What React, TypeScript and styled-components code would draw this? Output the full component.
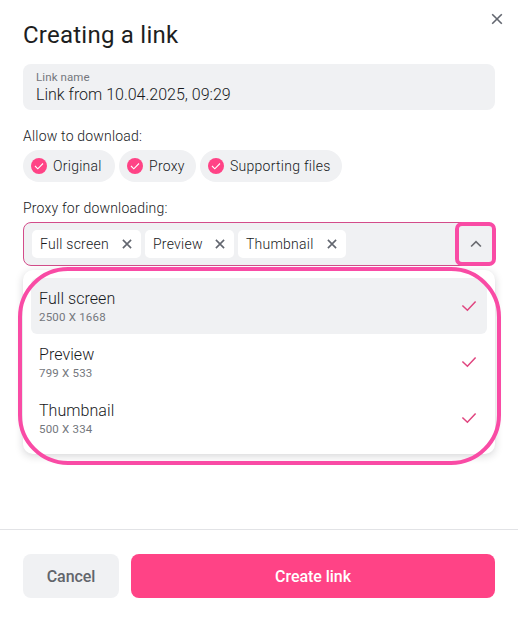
import React from "react";
import styled, { createGlobalStyle } from "styled-components";

const GlobalStyle = createGlobalStyle`
  *, *::before, *::after { box-sizing: border-box; }
  body { margin: 0; background: #fff; }
  button { border: 0; padding: 0; background: none; font: inherit; color: inherit; cursor: pointer; }
`;

const Dialog = styled.main`
  position: relative;
  display: flex;
  flex-direction: column;
  width: 518px;
  height: 619px;
  overflow: hidden;
  background: #fff;
  color: #17191c;
  font-family: Roboto, "Liberation Sans", sans-serif;
  font-size: 14px;
  font-weight: 300;
`;

const CloseButton = styled.button`
  position: absolute;
  top: 11px;
  right: 13px;
  width: 16px;
  height: 16px;
  color: #62666f;
  svg { display: block; }
`;

const Body = styled.div`
  flex: 1;
  display: flex;
  flex-direction: column;
  padding: 20px 23px 0;
`;

const Title = styled.h1`
  margin: 0 0 14px;
  font-size: 24px;
  font-weight: 400;
  line-height: 30px;
  letter-spacing: 0.24px;
  color: #1d1e21;
`;

const Field = styled.label`
  display: flex;
  flex-direction: column;
  height: 46px;
  padding: 6px 13px;
  border-radius: 8px;
  background: #f0f1f3;
`;

const FieldLabel = styled.span`
  font-size: 11.5px;
  font-weight: 400;
  line-height: 15px;
  letter-spacing: 0.1px;
  color: #74777d;
`;

const FieldValue = styled.span`
  font-size: 16px;
  line-height: 20px;
`;

const Caption = styled.div<{ $gap: number }>`
  margin-top: ${({ $gap }) => $gap}px;
  line-height: 20px;
  letter-spacing: 0.2px;
`;

const Chips = styled.div`
  display: flex;
  gap: 4px;
  margin-top: 4px;
`;

const Chip = styled.button<{ $width: number }>`
  display: flex;
  align-items: center;
  gap: 6px;
  width: ${({ $width }) => $width}px;
  height: 32px;
  padding-left: 8px;
  border-radius: 16px;
  background: #f0f1f3;
  letter-spacing: 0.27px;
  white-space: nowrap;
`;

const Select = styled.div`
  position: relative;
  display: flex;
  align-items: center;
  gap: 4px;
  height: 44px;
  margin-top: 4px;
  padding-left: 8px;
  border: 1px solid #d34c8a;
  border-radius: 8px;
  background: #f0f1f3;
`;

const Tag = styled.span<{ $width: number }>`
  display: flex;
  align-items: center;
  justify-content: space-between;
  width: ${({ $width }) => $width}px;
  height: 28px;
  padding: 0 8px;
  border-radius: 5px;
  background: #fff;
  letter-spacing: 0.24px;
  svg { display: block; color: #62666f; }
`;

const Toggle = styled.button`
  position: absolute;
  top: -1px;
  right: -2px;
  display: grid;
  place-items: center;
  width: 41px;
  height: 44px;
  border: 4px solid #f94ba5;
  border-radius: 7px;
  color: #6a6b70;
`;

const Menu = styled.div`
  position: relative;
  height: 184px;
  margin-top: 4px;
  padding: 8px;
  border-radius: 10px;
  background: #fff;
  box-shadow: 0 2px 8px rgba(20, 24, 35, 0.18);
`;

const Highlight = styled.div`
  position: absolute;
  inset: -3px -6px -11px -5px;
  border: 4px solid #f94ba5;
  border-radius: 50px;
  pointer-events: none;
`;

const Option = styled.div<{ $active?: boolean }>`
  display: flex;
  align-items: center;
  justify-content: space-between;
  height: 56px;
  padding: 0 10px 0 8px;
  border-radius: 6px;
  background: ${({ $active }) => ($active ? "#f0f1f3" : "transparent")};
`;

const OptionText = styled.div`
  padding-top: 1px;
`;

const OptionName = styled.div`
  font-size: 16px;
  line-height: 20px;
  letter-spacing: 0.06px;
`;

const OptionSize = styled.div`
  font-size: 11.5px;
  font-weight: 400;
  line-height: 16px;
  letter-spacing: 0.2px;
  color: #74777d;
`;

const Footer = styled.footer`
  display: flex;
  gap: 12px;
  height: 90px;
  padding: 24px 23px 0;
  border-top: 1px solid #e2e3e6;
`;

const Action = styled.button<{ $primary?: boolean }>`
  flex: ${({ $primary }) => ($primary ? "1" : "0 0 96px")};
  height: 44px;
  border-radius: 8px;
  background: ${({ $primary }) => ($primary ? "#ff4386" : "#f0f1f3")};
  color: ${({ $primary }) => ($primary ? "#fff" : "#62656b")};
  font-size: 16px;
  font-weight: 500;
  letter-spacing: -0.05px;
`;

const Cross = ({ size, reach }: { size: number; reach: number }) => {
  const a = size / 2 - reach;
  const b = size / 2 + reach;
  return (
    <svg width={size} height={size} fill="none" stroke="currentColor" strokeWidth="1.6">
      <path d={`M${a} ${a}L${b} ${b}M${b} ${a}L${a} ${b}`} />
    </svg>
  );
};

const RoundCheck = () => (
  <svg width="16" height="16" viewBox="0 0 16 16" fill="none">
    <circle cx="8" cy="8" r="8" fill="#ff4386" />
    <path d="M4 8l2.8 2.8L12 5.5" stroke="#fff" strokeWidth="1.1" />
  </svg>
);

const Check = () => (
  <svg width="16" height="16" viewBox="0 0 16 16" fill="none">
    <path d="M1.4 7.5l5 4.8 8.2-8.8" stroke="#e0457f" strokeWidth="1.5" />
  </svg>
);

const formats = [
  { name: "Original", width: 92 },
  { name: "Proxy", width: 77 },
  { name: "Supporting files", width: 142 },
];

const proxies = [
  { name: "Full screen", size: "2500 X 1668", width: 109 },
  { name: "Preview", size: "799 X 533", width: 89 },
  { name: "Thumbnail", size: "500 X 334", width: 108 },
];

export default function App() {
  return (
    <Dialog>
      <GlobalStyle />
      <CloseButton aria-label="Close">
        <Cross size={16} reach={4.8} />
      </CloseButton>
      <Body>
        <Title>Creating a link</Title>
        <Field>
          <FieldLabel>Link name</FieldLabel>
          <FieldValue>Link from 10.04.2025, 09:29</FieldValue>
        </Field>
        <Caption $gap={16}>Allow to download:</Caption>
        <Chips>
          {formats.map((f) => (
            <Chip key={f.name} $width={f.width}>
              <RoundCheck />
              {f.name}
            </Chip>
          ))}
        </Chips>
        <Caption $gap={16}>Proxy for downloading:</Caption>
        <Select>
          {proxies.map((p) => (
            <Tag key={p.name} $width={p.width}>
              {p.name}
              <Cross size={12} reach={4.1} />
            </Tag>
          ))}
          <Toggle aria-label="Collapse list">
            <svg width="14" height="14" viewBox="0 0 14 14" fill="none">
              <path d="M2.1 9.5L7 4.7l4.9 4.8" stroke="currentColor" strokeWidth="1.7" />
            </svg>
          </Toggle>
        </Select>
        <Menu>
          {proxies.map((p, i) => (
            <Option key={p.name} $active={i === 0}>
              <OptionText>
                <OptionName>{p.name}</OptionName>
                <OptionSize>{p.size}</OptionSize>
              </OptionText>
              <Check />
            </Option>
          ))}
          <Highlight />
        </Menu>
      </Body>
      <Footer>
        <Action>Cancel</Action>
        <Action $primary>Create link</Action>
      </Footer>
    </Dialog>
  );
}
